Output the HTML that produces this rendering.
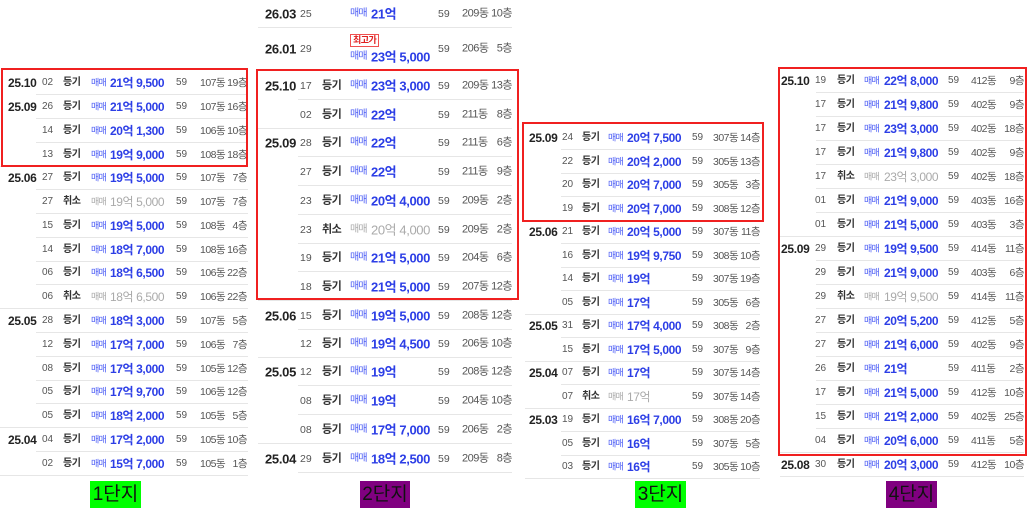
<!DOCTYPE html>
<html><head><meta charset="utf-8"><style>
*{margin:0;padding:0;box-sizing:border-box}
body{width:1027px;height:520px;background:#fff;position:relative;overflow:hidden;font-family:"Liberation Sans","Noto Sans CJK KR",sans-serif;color:#333}
.P{position:absolute;top:0;height:480px}
.r{position:absolute;left:0;height:24px;white-space:nowrap}
.r::after{content:"";position:absolute;left:36px;right:0;bottom:0;border-bottom:1px solid #e6e6e6}
.r.g::after{left:0}
.r span{position:absolute;top:50%;transform:translateY(-50%);line-height:1}
.d{font-weight:bold;font-size:12px;color:#222;letter-spacing:-0.3px}
.n{font-size:10px;color:#555}
.t{font-weight:bold;font-size:10px;color:#333;letter-spacing:-0.5px}
.m{font-size:9px;color:#4b5cf5;letter-spacing:-0.8px}
.p{font-weight:bold;font-size:12px;color:#2c3ee6;letter-spacing:-0.4px}
.a{font-size:10px;color:#555}
.b{font-size:10.5px;color:#555;letter-spacing:-0.5px}
.f{font-size:10.5px;color:#555;text-align:right;letter-spacing:-0.5px}
.x .m,.x .p{color:#aaa;font-weight:normal}
.box{position:absolute;border:2px solid #f02020}
.lab{position:absolute;top:481px;height:27px;font-size:19px;line-height:27px;color:#111;text-align:center;white-space:nowrap;overflow:hidden}
#p1{left:0;width:250px}
#p1 .r{width:248px}
#p1 .d{left:8px}#p1 .n{left:42px}#p1 .t{left:63px}#p1 .m{left:91px}#p1 .p{left:110px}#p1 .a{left:176px}#p1 .b{left:200px}#p1 .f{right:1px}
#p2{left:262px;width:255px}
#p2 .r{width:250px;height:29px}
#p2 .r::after{left:36px}
#p2 .r.g::after{left:-4px}
#p2 .d{left:3px;font-size:13px}#p2 .n{left:38px;font-size:10.5px}#p2 .t{left:60px;font-size:11px}#p2 .m{left:88px;font-size:10px}#p2 .p{left:109px;font-size:13px}#p2 .a{left:176px;font-size:10.5px}#p2 .b{left:200px;font-size:11px}#p2 .f{right:0;font-size:11px}
#p3{left:525px;width:245px}
#p3 .r{width:235px}
#p3 .d{left:4px}#p3 .n{left:37px}#p3 .t{left:57px}#p3 .m{left:83px}#p3 .p{left:102px}#p3 .a{left:167px}#p3 .b{left:188px}#p3 .f{right:0}
#p4{left:780px;width:247px}
#p4 .r{width:244px}
#p4 .d{left:1px}#p4 .n{left:35px}#p4 .t{left:57px}#p4 .m{left:84px}#p4 .p{left:104px}#p4 .a{left:168px}#p4 .b{left:191px}#p4 .f{right:0}
#p2 .r .badge{position:absolute;left:88px;top:6px;transform:none;font-size:9px;color:#e02020;border:1px solid #f05050;padding:1px 2px;line-height:1;font-weight:bold;letter-spacing:-0.5px}
</style></head><body>

<div class="P" id="p1">
<div class="r" style="top:71px"><span class="d">25.10</span><span class="n">02</span><span class="t">등기</span><span class="m">매매</span><span class="p">21억 9,500</span><span class="a">59</span><span class="b">107동</span><span class="f">19층</span></div>
<div class="r" style="top:95px"><span class="d">25.09</span><span class="n">26</span><span class="t">등기</span><span class="m">매매</span><span class="p">21억 5,000</span><span class="a">59</span><span class="b">107동</span><span class="f">16층</span></div>
<div class="r" style="top:119px"><span class="n">14</span><span class="t">등기</span><span class="m">매매</span><span class="p">20억 1,300</span><span class="a">59</span><span class="b">106동</span><span class="f">10층</span></div>
<div class="r g" style="top:143px"><span class="n">13</span><span class="t">등기</span><span class="m">매매</span><span class="p">19억 9,000</span><span class="a">59</span><span class="b">108동</span><span class="f">18층</span></div>
<div class="r" style="top:166px"><span class="d">25.06</span><span class="n">27</span><span class="t">등기</span><span class="m">매매</span><span class="p">19억 5,000</span><span class="a">59</span><span class="b">107동</span><span class="f">7층</span></div>
<div class="r x" style="top:190px"><span class="n">27</span><span class="t">취소</span><span class="m">매매</span><span class="p">19억 5,000</span><span class="a">59</span><span class="b">107동</span><span class="f">7층</span></div>
<div class="r" style="top:214px"><span class="n">15</span><span class="t">등기</span><span class="m">매매</span><span class="p">19억 5,000</span><span class="a">59</span><span class="b">108동</span><span class="f">4층</span></div>
<div class="r" style="top:238px"><span class="n">14</span><span class="t">등기</span><span class="m">매매</span><span class="p">18억 7,000</span><span class="a">59</span><span class="b">108동</span><span class="f">16층</span></div>
<div class="r" style="top:261px"><span class="n">06</span><span class="t">등기</span><span class="m">매매</span><span class="p">18억 6,500</span><span class="a">59</span><span class="b">106동</span><span class="f">22층</span></div>
<div class="r x g" style="top:285px"><span class="n">06</span><span class="t">취소</span><span class="m">매매</span><span class="p">18억 6,500</span><span class="a">59</span><span class="b">106동</span><span class="f">22층</span></div>
<div class="r" style="top:309px"><span class="d">25.05</span><span class="n">28</span><span class="t">등기</span><span class="m">매매</span><span class="p">18억 3,000</span><span class="a">59</span><span class="b">107동</span><span class="f">5층</span></div>
<div class="r" style="top:333px"><span class="n">12</span><span class="t">등기</span><span class="m">매매</span><span class="p">17억 7,000</span><span class="a">59</span><span class="b">106동</span><span class="f">7층</span></div>
<div class="r" style="top:357px"><span class="n">08</span><span class="t">등기</span><span class="m">매매</span><span class="p">17억 3,000</span><span class="a">59</span><span class="b">105동</span><span class="f">12층</span></div>
<div class="r" style="top:380px"><span class="n">05</span><span class="t">등기</span><span class="m">매매</span><span class="p">17억 9,700</span><span class="a">59</span><span class="b">106동</span><span class="f">12층</span></div>
<div class="r g" style="top:404px"><span class="n">05</span><span class="t">등기</span><span class="m">매매</span><span class="p">18억 2,000</span><span class="a">59</span><span class="b">105동</span><span class="f">5층</span></div>
<div class="r" style="top:428px"><span class="d">25.04</span><span class="n">04</span><span class="t">등기</span><span class="m">매매</span><span class="p">17억 2,000</span><span class="a">59</span><span class="b">105동</span><span class="f">10층</span></div>
<div class="r g" style="top:452px"><span class="n">02</span><span class="t">등기</span><span class="m">매매</span><span class="p">15억 7,000</span><span class="a">59</span><span class="b">105동</span><span class="f">1층</span></div>
</div>
<div class="box" style="left:1px;top:68px;width:247px;height:99px"></div>
<div class="lab" style="left:90px;width:51px;background:#00ff00">1단지</div>

<div class="P" id="p2">
<div class="r g" style="top:0;height:28px"><span class="d">26.03</span><span class="n">25</span><span class="m">매매</span><span class="p">21억</span><span class="a">59</span><span class="b">209동</span><span class="f">10층</span></div>
<div class="r g" style="top:28px;height:42px"><span class="d">26.01</span><span class="n">29</span><span class="badge">최고가</span><span class="m" style="top:29px">매매</span><span class="p" style="top:29px">23억 5,000</span><span class="a">59</span><span class="b">206동</span><span class="f">5층</span></div>
<div class="r" style="top:71px"><span class="d">25.10</span><span class="n">17</span><span class="t">등기</span><span class="m">매매</span><span class="p">23억 3,000</span><span class="a">59</span><span class="b">209동</span><span class="f">13층</span></div>
<div class="r g" style="top:100px"><span class="n">02</span><span class="t">등기</span><span class="m">매매</span><span class="p">22억</span><span class="a">59</span><span class="b">211동</span><span class="f">8층</span></div>
<div class="r" style="top:128px"><span class="d">25.09</span><span class="n">28</span><span class="t">등기</span><span class="m">매매</span><span class="p">22억</span><span class="a">59</span><span class="b">211동</span><span class="f">6층</span></div>
<div class="r" style="top:157px"><span class="n">27</span><span class="t">등기</span><span class="m">매매</span><span class="p">22억</span><span class="a">59</span><span class="b">211동</span><span class="f">9층</span></div>
<div class="r" style="top:186px"><span class="n">23</span><span class="t">등기</span><span class="m">매매</span><span class="p">20억 4,000</span><span class="a">59</span><span class="b">209동</span><span class="f">2층</span></div>
<div class="r x" style="top:215px"><span class="n">23</span><span class="t">취소</span><span class="m">매매</span><span class="p">20억 4,000</span><span class="a">59</span><span class="b">209동</span><span class="f">2층</span></div>
<div class="r" style="top:243px"><span class="n">19</span><span class="t">등기</span><span class="m">매매</span><span class="p">21억 5,000</span><span class="a">59</span><span class="b">204동</span><span class="f">6층</span></div>
<div class="r g" style="top:272px"><span class="n">18</span><span class="t">등기</span><span class="m">매매</span><span class="p">21억 5,000</span><span class="a">59</span><span class="b">207동</span><span class="f">12층</span></div>
<div class="r" style="top:301px"><span class="d">25.06</span><span class="n">15</span><span class="t">등기</span><span class="m">매매</span><span class="p">19억 5,000</span><span class="a">59</span><span class="b">208동</span><span class="f">12층</span></div>
<div class="r g" style="top:329px"><span class="n">12</span><span class="t">등기</span><span class="m">매매</span><span class="p">19억 4,500</span><span class="a">59</span><span class="b">206동</span><span class="f">10층</span></div>
<div class="r" style="top:357px"><span class="d">25.05</span><span class="n">12</span><span class="t">등기</span><span class="m">매매</span><span class="p">19억</span><span class="a">59</span><span class="b">208동</span><span class="f">12층</span></div>
<div class="r" style="top:386px"><span class="n">08</span><span class="t">등기</span><span class="m">매매</span><span class="p">19억</span><span class="a">59</span><span class="b">204동</span><span class="f">10층</span></div>
<div class="r g" style="top:415px"><span class="n">08</span><span class="t">등기</span><span class="m">매매</span><span class="p">17억 7,000</span><span class="a">59</span><span class="b">206동</span><span class="f">2층</span></div>
<div class="r" style="top:444px"><span class="d">25.04</span><span class="n">29</span><span class="t">등기</span><span class="m">매매</span><span class="p">18억 2,500</span><span class="a">59</span><span class="b">209동</span><span class="f">8층</span></div>
</div>
<div class="box" style="left:256px;top:69px;width:263px;height:231px"></div>
<div class="lab" style="left:360px;width:50px;background:#800080">2단지</div>

<div class="P" id="p3">
<div class="r" style="top:126px"><span class="d">25.09</span><span class="n">24</span><span class="t">등기</span><span class="m">매매</span><span class="p">20억 7,500</span><span class="a">59</span><span class="b">307동</span><span class="f">14층</span></div>
<div class="r" style="top:150px"><span class="n">22</span><span class="t">등기</span><span class="m">매매</span><span class="p">20억 2,000</span><span class="a">59</span><span class="b">305동</span><span class="f">13층</span></div>
<div class="r" style="top:173px"><span class="n">20</span><span class="t">등기</span><span class="m">매매</span><span class="p">20억 7,000</span><span class="a">59</span><span class="b">305동</span><span class="f">3층</span></div>
<div class="r g" style="top:197px"><span class="n">19</span><span class="t">등기</span><span class="m">매매</span><span class="p">20억 7,000</span><span class="a">59</span><span class="b">308동</span><span class="f">12층</span></div>
<div class="r" style="top:220px"><span class="d">25.06</span><span class="n">21</span><span class="t">등기</span><span class="m">매매</span><span class="p">20억 5,000</span><span class="a">59</span><span class="b">307동</span><span class="f">11층</span></div>
<div class="r" style="top:244px"><span class="n">16</span><span class="t">등기</span><span class="m">매매</span><span class="p">19억 9,750</span><span class="a">59</span><span class="b">308동</span><span class="f">10층</span></div>
<div class="r" style="top:267px"><span class="n">14</span><span class="t">등기</span><span class="m">매매</span><span class="p">19억</span><span class="a">59</span><span class="b">307동</span><span class="f">19층</span></div>
<div class="r g" style="top:291px"><span class="n">05</span><span class="t">등기</span><span class="m">매매</span><span class="p">17억</span><span class="a">59</span><span class="b">305동</span><span class="f">6층</span></div>
<div class="r" style="top:314px"><span class="d">25.05</span><span class="n">31</span><span class="t">등기</span><span class="m">매매</span><span class="p">17억 4,000</span><span class="a">59</span><span class="b">308동</span><span class="f">2층</span></div>
<div class="r g" style="top:338px"><span class="n">15</span><span class="t">등기</span><span class="m">매매</span><span class="p">17억 5,000</span><span class="a">59</span><span class="b">307동</span><span class="f">9층</span></div>
<div class="r" style="top:361px"><span class="d">25.04</span><span class="n">07</span><span class="t">등기</span><span class="m">매매</span><span class="p">17억</span><span class="a">59</span><span class="b">307동</span><span class="f">14층</span></div>
<div class="r x g" style="top:385px"><span class="n">07</span><span class="t">취소</span><span class="m">매매</span><span class="p">17억</span><span class="a">59</span><span class="b">307동</span><span class="f">14층</span></div>
<div class="r" style="top:408px"><span class="d">25.03</span><span class="n">19</span><span class="t">등기</span><span class="m">매매</span><span class="p">16억 7,000</span><span class="a">59</span><span class="b">308동</span><span class="f">20층</span></div>
<div class="r" style="top:432px"><span class="n">05</span><span class="t">등기</span><span class="m">매매</span><span class="p">16억</span><span class="a">59</span><span class="b">307동</span><span class="f">5층</span></div>
<div class="r g" style="top:455px"><span class="n">03</span><span class="t">등기</span><span class="m">매매</span><span class="p">16억</span><span class="a">59</span><span class="b">305동</span><span class="f">10층</span></div>
</div>
<div class="box" style="left:522px;top:122px;width:242px;height:100px"></div>
<div class="lab" style="left:635px;width:51px;background:#00ff00">3단지</div>

<div class="P" id="p4">
<div class="r" style="top:69px"><span class="d">25.10</span><span class="n">19</span><span class="t">등기</span><span class="m">매매</span><span class="p">22억 8,000</span><span class="a">59</span><span class="b">412동</span><span class="f">9층</span></div>
<div class="r" style="top:93px"><span class="n">17</span><span class="t">등기</span><span class="m">매매</span><span class="p">21억 9,800</span><span class="a">59</span><span class="b">402동</span><span class="f">9층</span></div>
<div class="r" style="top:117px"><span class="n">17</span><span class="t">등기</span><span class="m">매매</span><span class="p">23억 3,000</span><span class="a">59</span><span class="b">402동</span><span class="f">18층</span></div>
<div class="r" style="top:141px"><span class="n">17</span><span class="t">등기</span><span class="m">매매</span><span class="p">21억 9,800</span><span class="a">59</span><span class="b">402동</span><span class="f">9층</span></div>
<div class="r x" style="top:165px"><span class="n">17</span><span class="t">취소</span><span class="m">매매</span><span class="p">23억 3,000</span><span class="a">59</span><span class="b">402동</span><span class="f">18층</span></div>
<div class="r" style="top:189px"><span class="n">01</span><span class="t">등기</span><span class="m">매매</span><span class="p">21억 9,000</span><span class="a">59</span><span class="b">403동</span><span class="f">16층</span></div>
<div class="r g" style="top:213px"><span class="n">01</span><span class="t">등기</span><span class="m">매매</span><span class="p">21억 5,000</span><span class="a">59</span><span class="b">403동</span><span class="f">3층</span></div>
<div class="r" style="top:237px"><span class="d">25.09</span><span class="n">29</span><span class="t">등기</span><span class="m">매매</span><span class="p">19억 9,500</span><span class="a">59</span><span class="b">414동</span><span class="f">11층</span></div>
<div class="r" style="top:261px"><span class="n">29</span><span class="t">등기</span><span class="m">매매</span><span class="p">21억 9,000</span><span class="a">59</span><span class="b">403동</span><span class="f">6층</span></div>
<div class="r x" style="top:285px"><span class="n">29</span><span class="t">취소</span><span class="m">매매</span><span class="p">19억 9,500</span><span class="a">59</span><span class="b">414동</span><span class="f">11층</span></div>
<div class="r" style="top:309px"><span class="n">27</span><span class="t">등기</span><span class="m">매매</span><span class="p">20억 5,200</span><span class="a">59</span><span class="b">412동</span><span class="f">5층</span></div>
<div class="r" style="top:333px"><span class="n">27</span><span class="t">등기</span><span class="m">매매</span><span class="p">21억 6,000</span><span class="a">59</span><span class="b">402동</span><span class="f">9층</span></div>
<div class="r" style="top:357px"><span class="n">26</span><span class="t">등기</span><span class="m">매매</span><span class="p">21억</span><span class="a">59</span><span class="b">411동</span><span class="f">2층</span></div>
<div class="r" style="top:381px"><span class="n">17</span><span class="t">등기</span><span class="m">매매</span><span class="p">21억 5,000</span><span class="a">59</span><span class="b">412동</span><span class="f">10층</span></div>
<div class="r" style="top:405px"><span class="n">15</span><span class="t">등기</span><span class="m">매매</span><span class="p">21억 2,000</span><span class="a">59</span><span class="b">402동</span><span class="f">25층</span></div>
<div class="r g" style="top:429px"><span class="n">04</span><span class="t">등기</span><span class="m">매매</span><span class="p">20억 6,000</span><span class="a">59</span><span class="b">411동</span><span class="f">5층</span></div>
<div class="r g" style="top:453px"><span class="d">25.08</span><span class="n">30</span><span class="t">등기</span><span class="m">매매</span><span class="p">20억 3,000</span><span class="a">59</span><span class="b">412동</span><span class="f">10층</span></div>
</div>
<div class="box" style="left:778px;top:67px;width:249px;height:389px"></div>
<div class="lab" style="left:886px;width:51px;background:#800080">4단지</div>

</body></html>
